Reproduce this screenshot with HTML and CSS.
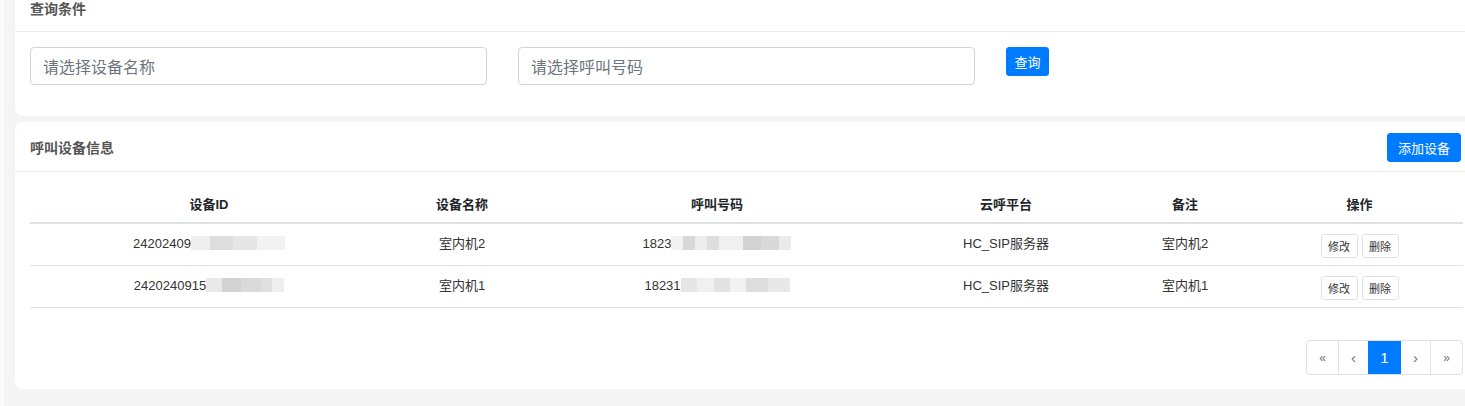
FILE: index.html
```html
<!DOCTYPE html>
<html lang="zh">
<head>
<meta charset="utf-8">
<title>呼叫设备</title>
<link rel="stylesheet" href="styles.css">
</head>
<body>
<div class="page">
  <section class="card card-query">
    <div class="card-header"><span class="card-title">查询条件</span></div>
    <div class="query-body">
      <input class="form-input" type="text" placeholder="请选择设备名称">
      <input class="form-input" type="text" placeholder="请选择呼叫号码">
      <button class="btn btn-primary btn-query">查询</button>
    </div>
  </section>

  <section class="card card-list">
    <div class="card-header header-list">
      <span class="card-title">呼叫设备信息</span>
      <button class="btn btn-primary btn-add">添加设备</button>
    </div>
    <table class="data-table">
      <colgroup>
        <col class="c1"><col class="c2"><col class="c3"><col class="c4"><col class="c5"><col class="c6">
      </colgroup>
      <thead>
        <tr><th>设备ID</th><th>设备名称</th><th>呼叫号码</th><th>云呼平台</th><th>备注</th><th>操作</th></tr>
      </thead>
      <tbody>
        <tr>
          <td>24202409<span class="mosaic m-id1"></span></td>
          <td>室内机2</td>
          <td>1823<span class="mosaic m-num1"></span></td>
          <td>HC_SIP服务器</td>
          <td>室内机2</td>
          <td><div class="ops"><button class="btn btn-sm">修改</button><button class="btn btn-sm">删除</button></div></td>
        </tr>
        <tr>
          <td>2420240915<span class="mosaic m-id2"></span></td>
          <td>室内机1</td>
          <td>18231<span class="mosaic m-num2"></span></td>
          <td>HC_SIP服务器</td>
          <td>室内机1</td>
          <td><div class="ops"><button class="btn btn-sm">修改</button><button class="btn btn-sm">删除</button></div></td>
        </tr>
      </tbody>
    </table>
    <div class="pager-row">
      <ul class="pager">
        <li class="pg">«</li>
        <li class="pg pg-prev">‹</li>
        <li class="pg pg-active">1</li>
        <li class="pg pg-next">›</li>
        <li class="pg">»</li>
      </ul>
    </div>
  </section>
</div>
</body>
</html>
```

FILE: styles.css
```css
html, body {
  margin: 0;
  padding: 0;
}
body {
  background: #f4f4f4;
  font-family: "Liberation Sans", "Noto Sans CJK SC", sans-serif;
  font-size: 13px;
  color: #212529;
  overflow: hidden;
}
.page {
  border-left: 4px solid #fbfbfb;
  padding-left: 11px;
  height: 406px;
  box-sizing: border-box;
}
.card {
  background: #fff;
}
.card-query {
  border-radius: 0 0 0 8px;
}
.card-list {
  margin-top: 6px;
  border-radius: 8px 0 0 8px;
  padding: 0 2px 14px 15px;
}
.card-header {
  border-bottom: 1px solid #e9ecef;
}
.card-query .card-header {
  padding: 0 15px 13px;
  line-height: 17px;
}
.card-title {
  font-size: 14px;
  font-weight: bold;
  color: #555;
  font-family: "Noto Sans CJK SC", sans-serif;
}
.header-list {
  display: flex;
  align-items: center;
  justify-content: space-between;
  padding: 11px 4px 9px 15px;
  margin-left: -15px;
  margin-right: -2px;
}
.header-list .card-title {
  margin-top: -2px;
}
.query-body {
  display: flex;
  align-items: flex-start;
  gap: 31px;
  padding: 15px 15px 31px;
}
.form-input {
  width: 457px;
  height: 38px;
  box-sizing: border-box;
  border: 1px solid #ced4da;
  border-radius: 4px;
  padding: 0 12px;
  font-size: 16px;
  font-family: "Noto Sans CJK SC", sans-serif;
  color: #495057;
  outline: none;
}
.form-input::placeholder {
  color: #6c757d;
}
.btn {
  font-family: "Noto Sans CJK SC", sans-serif;
  cursor: pointer;
  box-sizing: border-box;
}
.btn-primary {
  background: #007bff;
  color: #fff;
  border: 1px solid #007bff;
  border-radius: 3px;
  height: 29px;
  font-size: 13px;
  padding: 0;
}
.btn-query {
  width: 43px;
}
.btn-add {
  width: 74px;
}
.data-table {
  width: 1433px;
  table-layout: fixed;
  border-collapse: collapse;
}
.c1 { width: 358px; }
.c2 { width: 148px; }
.c3 { width: 362px; }
.c4 { width: 216px; }
.c5 { width: 142px; }
.c6 { width: 207px; }
.data-table th {
  font-weight: bold;
  font-size: 13px;
  line-height: 20px;
  padding: 23px 6px 7px;
  border-bottom: 2px solid #dee2e6;
  text-align: center;
  color: #212529;
}
.data-table td {
  text-align: center;
  padding: 0 6px 2px;
  height: 39px;
  line-height: 20px;
  border-bottom: 1px solid #dee2e6;
  color: #333;
  white-space: nowrap;
  vertical-align: middle;
}
.ops {
  display: flex;
  justify-content: center;
  gap: 4px;
  margin-top: 4px;
}
.mosaic {
  display: inline-block;
  vertical-align: middle;
  height: 14px;
  margin-top: -2px;
}
.m-id1 {
  width: 94px;
  background: linear-gradient(90deg, #eeeeee 0 20%, #dddddd 20% 45%, #e6e6e6 45% 70%, #f2f2f2 70% 100%);
}
.m-id2 {
  width: 78px;
  background: linear-gradient(90deg, #e9e9e9 0 20%, #d2d2d2 20% 45%, #dadada 45% 70%, #e0e0e0 70% 85%, #eeeeee 85% 100%);
}
.m-num1 {
  width: 120px;
  background: linear-gradient(90deg, #f2f2f2 0 10%, #d8d8d8 10% 20%, #ececec 20% 30%, #dddddd 30% 40%, #f0f0f0 40% 60%, #d2d2d2 60% 75%, #d9d9d9 75% 90%, #ebebeb 90% 100%);
}
.m-num2 {
  width: 109px;
  background: linear-gradient(90deg, #e6e6e6 0 15%, #f0f0f0 15% 30%, #e2e2e2 30% 45%, #f2f2f2 45% 60%, #dddddd 60% 80%, #e8e8e8 80% 100%);
}
.btn-sm {
  width: 37px;
  height: 24px;
  background: #fff;
  border: 1px solid #dee2e6;
  border-radius: 3px;
  font-size: 11px;
  color: #333;
  padding: 0;
}
.pager-row {
  display: flex;
  justify-content: flex-end;
  margin-top: 32px;
}
.pager {
  display: flex;
  list-style: none;
  margin: 0;
  padding: 0;
  border: 1px solid #dee2e6;
  border-radius: 4px;
  overflow: hidden;
}
.pg {
  width: 31px;
  height: 33px;
  display: flex;
  align-items: center;
  justify-content: center;
  color: #6c757d;
  font-size: 12px;
  border-left: 1px solid #dee2e6;
}
.pg:first-child {
  border-left: none;
}
.pg-prev, .pg-next {
  width: 29px;
  font-size: 15px;
}
.pg-active {
  width: 33px;
  background: #007bff;
  color: #fff;
  font-size: 15px;
  border-left: none;
}
.pg-active + .pg {
  border-left: none;
}
```
